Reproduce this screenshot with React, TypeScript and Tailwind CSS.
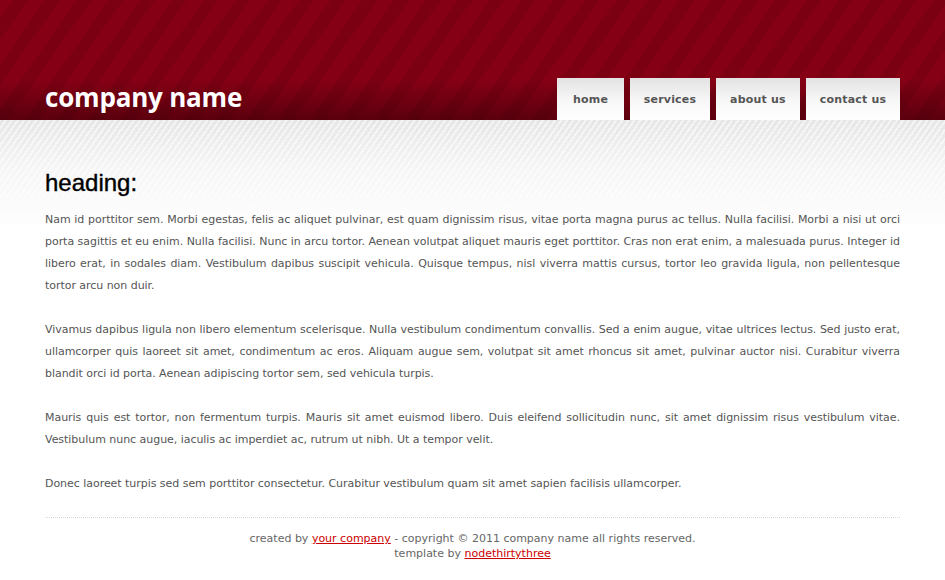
const NAV: { label: string; width: string }[] = [
  { label: "home", width: "w-[67px]" },
  { label: "services", width: "w-[80px]" },
  { label: "about us", width: "w-[84px]" },
  { label: "contact us", width: "w-[94px]" },
];

const PARAGRAPHS = [
  "Nam id porttitor sem. Morbi egestas, felis ac aliquet pulvinar, est quam dignissim risus, vitae porta magna purus ac tellus. Nulla facilisi. Morbi a nisi ut orci porta sagittis et eu enim. Nulla facilisi. Nunc in arcu tortor. Aenean volutpat aliquet mauris eget porttitor. Cras non erat enim, a malesuada purus. Integer id libero erat, in sodales diam. Vestibulum dapibus suscipit vehicula. Quisque tempus, nisl viverra mattis cursus, tortor leo gravida ligula, non pellentesque tortor arcu non duir.",
  "Vivamus dapibus ligula non libero elementum scelerisque. Nulla vestibulum condimentum convallis. Sed a enim augue, vitae ultrices lectus. Sed justo erat, ullamcorper quis laoreet sit amet, condimentum ac eros. Aliquam augue sem, volutpat sit amet rhoncus sit amet, pulvinar auctor nisi. Curabitur viverra blandit orci id porta. Aenean adipiscing tortor sem, sed vehicula turpis.",
  "Mauris quis est tortor, non fermentum turpis. Mauris sit amet euismod libero. Duis eleifend sollicitudin nunc, sit amet dignissim risus vestibulum vitae. Vestibulum nunc augue, iaculis ac imperdiet ac, rutrum ut nibh. Ut a tempor velit.",
  "Donec laoreet turpis sed sem porttitor consectetur. Curabitur vestibulum quam sit amet sapien facilisis ullamcorper.",
];

export default function App() {
  return (
    <div className="min-h-[580px] w-[945px] bg-white font-['DejaVu_Sans',sans-serif]">
      {/* red striped header */}
      <header className="h-[120px] bg-[#850015] bg-[repeating-linear-gradient(-55deg,#850015_0px,#850015_14px,#7a0012_14px,#7a0012_26px)]">
        <div className="flex h-full items-end justify-between bg-[linear-gradient(to_bottom,rgba(0,0,0,0)_0px,rgba(0,0,0,0)_80px,rgba(40,0,6,0.45)_120px)] px-[45px]">
          <h1 className="mb-[10px] font-['Open_Sans',sans-serif] text-[26px] font-bold leading-none tracking-[-0.2px] text-white">
            company name
          </h1>
          <nav className="flex gap-[6px]">
            {NAV.map((n) => (
              <a
                key={n.label}
                href="#"
                className={`${n.width} flex h-[42px] items-center justify-center bg-[linear-gradient(to_bottom,#e2e2e2_0px,#f7f7f7_22px,#ffffff_42px)] pt-[3px] text-[11px] font-bold tracking-[0.2px] text-[#555]`}
              >
                {n.label}
              </a>
            ))}
          </nav>
        </div>
      </header>

      {/* grey stripe band fading to white */}
      <main className="bg-[linear-gradient(to_bottom,#e6e6e6_0px,#f6f6f6_50px,#ffffff_110px)]">
        <div className="bg-[repeating-linear-gradient(-55deg,rgba(255,255,255,0)_0px,rgba(255,255,255,0)_3px,rgba(255,255,255,0.55)_3px,rgba(255,255,255,0.55)_5px)] px-[45px] pt-[48px]">
          <h2 className="font-['Liberation_Sans',sans-serif] text-[24px] leading-[30px] text-black [-webkit-text-stroke:0.4px_black]">heading:</h2>
        </div>
        <div className="px-[45px] pt-[11px]">
          {PARAGRAPHS.map((p, i) => (
            <p key={i} className="mb-[22px] text-justify text-[11px] leading-[22px] tracking-[-0.04px] text-[#555]">
              {p}
            </p>
          ))}
          <div className="mt-[2px] border-t border-dotted border-[#d8d8d8]" />
          <footer className="pt-[13px] text-center text-[11px] leading-[15px] text-[#666]">
            <p>
              created by{" "}
              <a href="#" className="text-[#c00] underline">
                your company
              </a>{" "}
              - copyright © 2011 company name all rights reserved.
            </p>
            <p>
              template by{" "}
              <a href="#" className="text-[#c00] underline">
                nodethirtythree
              </a>
            </p>
          </footer>
        </div>
      </main>
    </div>
  );
}
